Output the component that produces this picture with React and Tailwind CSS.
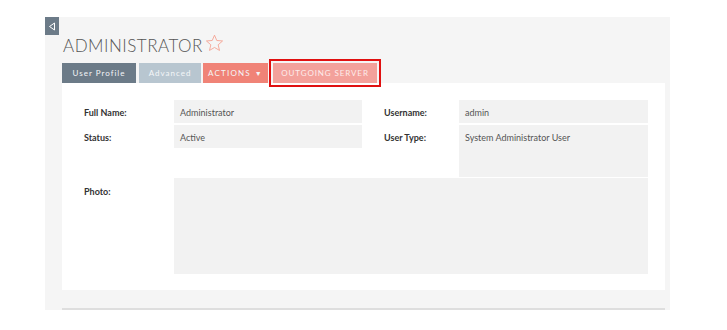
import React from "react";

const Field = ({ label, value, tall }) => (
  <>
    <div className="pt-[6px] text-[9px] font-bold text-[#333]">{label}</div>
    <div
      className={`bg-[#f2f2f2] px-[6px] pt-[6px] text-[9px] text-[#555] ${
        tall ? "h-[52px]" : "h-[23px]"
      }`}
    >
      {value}
    </div>
  </>
);

const App = () => {
  return (
    <div
      className="w-[727px] h-[330px] bg-white pt-[17px] pl-[45px]"
      style={{ fontFamily: "Lato, 'Open Sans', sans-serif" }}
    >
      <div className="relative w-[625px] h-[293px] bg-[#f5f5f5] pl-[17px] pr-[5px]">
        <button className="absolute top-0 left-0 w-[14px] h-[18px] bg-[#6c7b88] flex items-center justify-center">
          <svg width="8" height="9" viewBox="0 0 8 9">
            <path d="M6.5 1 L1.5 4.5 L6.5 8 Z" fill="none" stroke="#fff" strokeWidth="1" />
          </svg>
        </button>

        <div className="flex items-start pt-[15px] h-[46px]">
          <h1 className="text-[17px] font-light tracking-[0.5px] text-[#555] leading-[28px] ml-[1px]">
            ADMINISTRATOR
          </h1>
          <svg width="19" height="18" viewBox="0 0 24 23" className="ml-[2px] mt-[2px]">
            <path
              d="M12 1.5 L14.9 8.3 L22.3 8.9 L16.7 13.8 L18.4 21 L12 17.2 L5.6 21 L7.3 13.8 L1.7 8.9 L9.1 8.3 Z"
              fill="none"
              stroke="#f5a08f"
              strokeWidth="1.1"
            />
          </svg>
        </div>

        <div className="flex items-center h-[20px] text-[8px] font-normal text-[#f4f6f8]">
          <div className="h-[20px] w-[74px] bg-[#6c7b88] flex items-center justify-center tracking-[1px]">
            User Profile
          </div>
          <div className="h-[20px] w-[62px] ml-[3px] bg-[#b8c6d0] flex items-center justify-center tracking-[1px]">
            Advanced
          </div>
          <div className="h-[20px] w-[65px] ml-[2px] bg-[#f08377] flex items-center justify-center tracking-[1.2px]">
            ACTIONS
            <span className="ml-[4px] text-[7px]">▼</span>
          </div>
          <div className="relative ml-[5px] h-[20px] w-[104px] bg-[#f3a19b] flex items-center justify-center tracking-[0.9px] text-[#fdeceb]">
            OUTGOING SERVER
            <div className="absolute -left-[4px] -top-[4px] w-[112px] h-[28px] border-2 border-[#e01010]" />
          </div>
        </div>

        <div className="bg-white h-[207px] pt-[17px] pl-[22px]">
          <div className="grid grid-cols-[90px_188px_22px_75px_189px] gap-y-[2px] items-start">
            <Field label="Full Name:" value="Administrator" />
            <div />
            <Field label="Username:" value="admin" />
            <Field label="Status:" value="Active" />
            <div />
            <Field label="User Type:" value="System Administrator User" tall />
          </div>
          <div className="grid grid-cols-[90px_474px] mt-[1px]">
            <div className="pt-[7px] text-[9px] font-bold text-[#333]">Photo:</div>
            <div className="h-[96px] bg-[#f2f2f2]" />
          </div>
        </div>

        <div className="mt-[18px] h-[2px] bg-[#dedede]" />
      </div>
    </div>
  );
};

export default App;
